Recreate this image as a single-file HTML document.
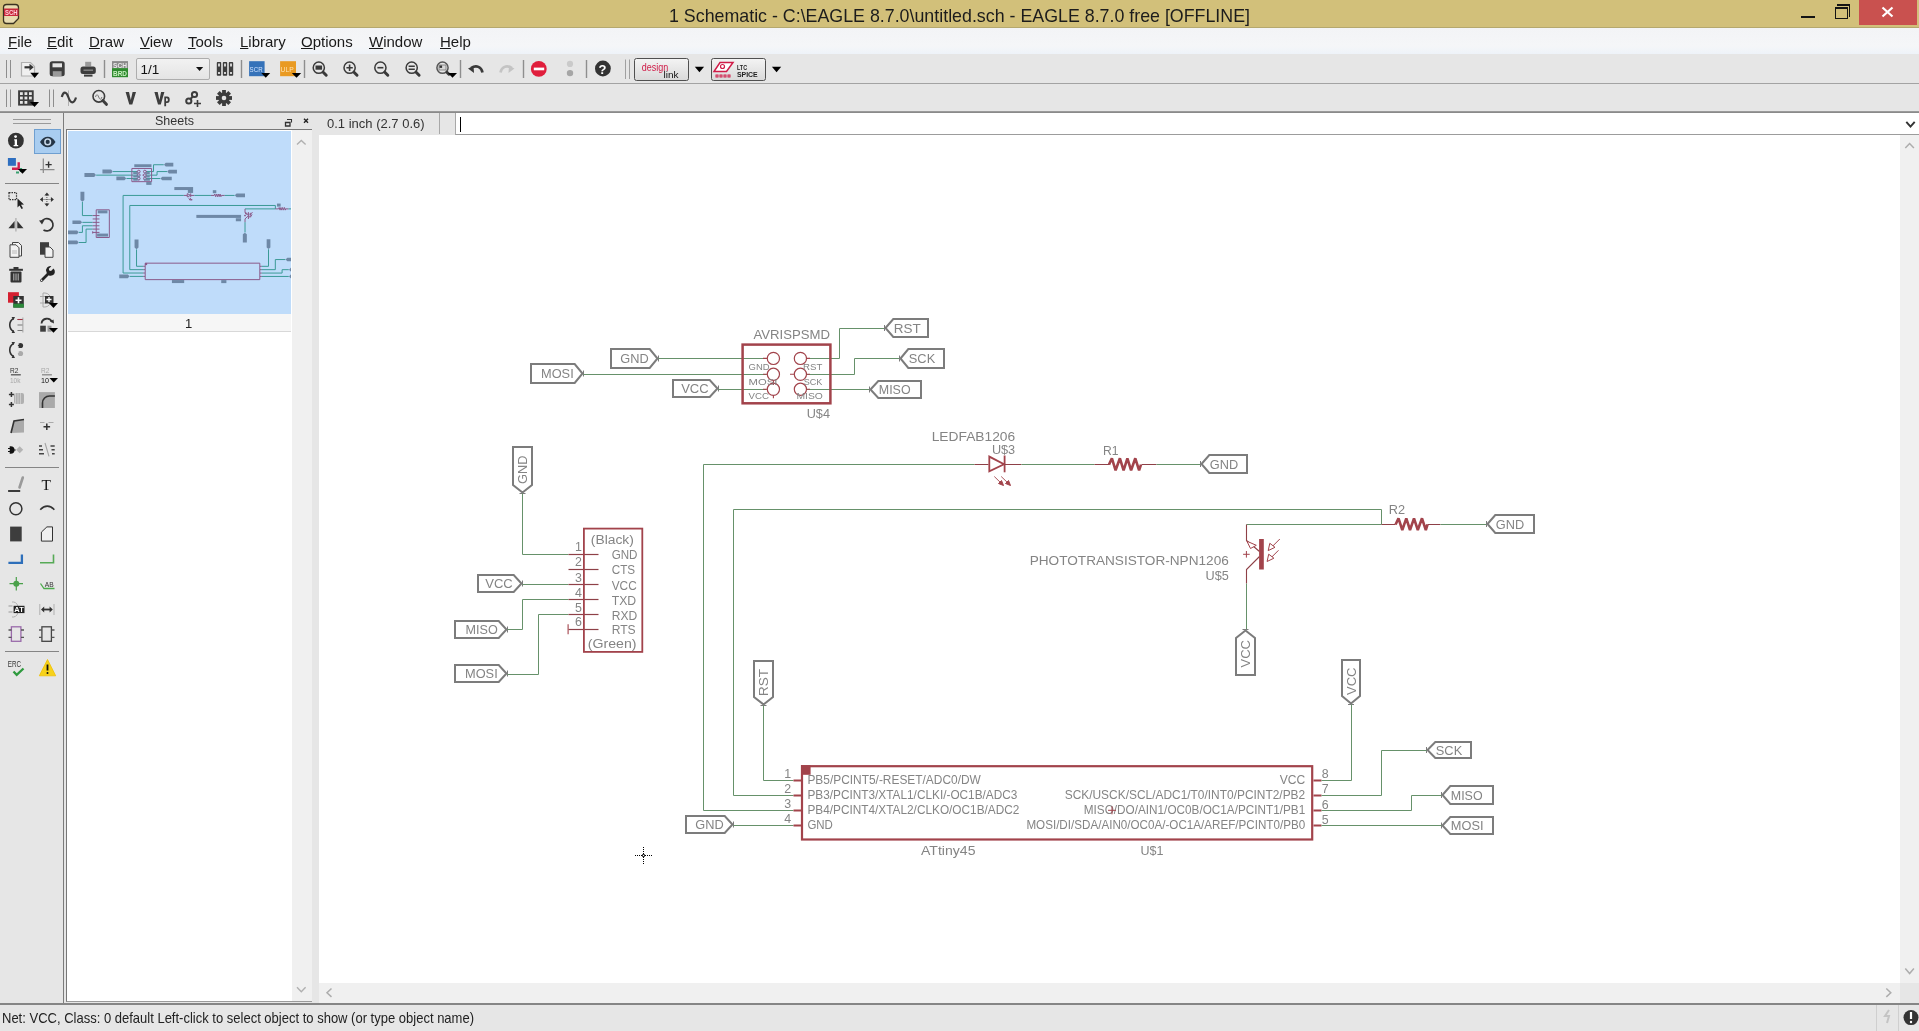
<!DOCTYPE html>
<html><head><meta charset="utf-8">
<style>
*{margin:0;padding:0;box-sizing:border-box}
html,body{width:1919px;height:1031px;overflow:hidden;background:#e6e6e6;font-family:"Liberation Sans",sans-serif}
body{will-change:transform}
.a{position:absolute}
svg{position:absolute;overflow:visible}
#title{left:0;top:0;width:1919px;height:28px;background:#d2c07a;border-bottom:1px solid #b5a86e}
#menu{left:0;top:28px;width:1919px;height:26px;background:linear-gradient(#f3f4f6 0,#f5f6f8 70%,#eef3f9 100%)}
#tb1{left:0;top:54px;width:1919px;height:30px;background:#e6e6e6;border-bottom:1px solid #a3a3a3}
#tb2{left:0;top:84px;width:1919px;height:29px;background:#e6e6e6;border-bottom:2px solid #9a9a9a}
.mi{position:absolute;top:33px;font-size:15px;color:#1a1a1a;line-height:17px}
#lefttb{left:0;top:113px;width:64px;height:890px;background:#e6e6e6;border-right:1px solid #a0a0a0}
#sheets{left:64px;top:113px;width:254px;height:890px;background:#e9e9e9;border-left:2px solid #a6a6a6}
#canvas{left:319px;top:135px;width:1581px;height:848px;background:#fff}
#status{left:0;top:1003px;width:1919px;height:28px;background:#e6e6e6;border-top:2px solid #858585}
</style></head><body>
<div id="title" class="a"></div>
<div class="a" style="left:0;top:0;width:1919px;height:28px;text-align:center">
  <span class="a" style="left:669px;top:5px;font-size:19px;line-height:21px;color:#1c1c1c;white-space:nowrap;transform:scaleX(0.9373);transform-origin:0 0">1 Schematic - C:\EAGLE 8.7.0\untitled.sch - EAGLE 8.7.0 free [OFFLINE]</span>
</div>
<!-- app icon -->
<svg style="left:0;top:0" width="30" height="28">
  <path d="M6.5,4.5 h9 a3,3 0 0 1 3,3 v11 l-5,5 h-7 a3,3 0 0 1 -3,-3 v-13 a3,3 0 0 1 3,-3z" fill="#e8dcb0" stroke="#3a3220" stroke-width="1.3"/>
  <rect x="4" y="8.5" width="14.5" height="7.5" fill="#c8283c"/>
  <text x="5" y="15" font-size="7.5" fill="#ffd0d8" font-family="Liberation Sans" font-weight="bold" textLength="12.5" lengthAdjust="spacingAndGlyphs">SCH</text>
</svg>
<!-- window buttons -->
<div class="a" style="left:1801px;top:16px;width:14px;height:2px;background:#141414"></div>
<div class="a" style="left:1837px;top:4px;width:13px;height:13px;border-top:2px solid #141414;border-right:1px solid #141414"></div>
<div class="a" style="left:1835px;top:7px;width:13px;height:12px;border:1px solid #141414;border-top-width:2px;background:#d2c07a"></div>
<div class="a" style="left:1859px;top:0;width:58px;height:25px;background:#c9514f"></div>
<svg style="left:1859px;top:0" width="58" height="25"><path d="M23.5,7.5 L33.5,16.5 M33.5,7.5 L23.5,16.5" stroke="#fff" stroke-width="2.2"/></svg>

<div id="menu" class="a"></div>
<span class="mi" style="left:8px"><u>F</u>ile</span>
<span class="mi" style="left:47px"><u>E</u>dit</span>
<span class="mi" style="left:89px"><u>D</u>raw</span>
<span class="mi" style="left:140px"><u>V</u>iew</span>
<span class="mi" style="left:188px"><u>T</u>ools</span>
<span class="mi" style="left:240px"><u>L</u>ibrary</span>
<span class="mi" style="left:301px"><u>O</u>ptions</span>
<span class="mi" style="left:369px"><u>W</u>indow</span>
<span class="mi" style="left:440px"><u>H</u>elp</span>

<div id="tb1" class="a"></div>
<div id="tb2" class="a"></div>
<svg style="left:0;top:0" width="820" height="113" font-family="Liberation Sans">
<defs>
<linearGradient id="btng" x1="0" y1="0" x2="0" y2="1"><stop offset="0" stop-color="#f4f4f4"/><stop offset="1" stop-color="#d9d9d9"/></linearGradient>
<linearGradient id="combog" x1="0" y1="0" x2="0" y2="1"><stop offset="0" stop-color="#f2f2f2"/><stop offset="1" stop-color="#e4e4e4"/></linearGradient>
</defs>
<g stroke="#8e8e8e" stroke-width="1.2">
<path d="M6.5,60V78 M10.5,60V78" stroke-width="1"/>
<path d="M104.5,60V78 M241.5,60V78 M304.5,60V78 M460.5,60V78 M523.5,60V78 M586.5,60V78" stroke-width="1.4"/>
<path d="M625.5,59.5V79 M629.5,59.5V79" stroke="#a0a0a0" stroke-width="1"/>
<path d="M6.5,89.5V107 M10.5,89.5V107 M49.5,89.5V107 M53.5,89.5V107" stroke-width="1"/>
</g>
<!-- open -->
<path d="M21.5,62.5h9l4,4v9.5h-13z" fill="#f0f0f0" stroke="#b0b0b0" stroke-width="1.2"/>
<path d="M24.5,67.3h6" stroke="#333" stroke-width="2.2"/><path d="M29.5,63.8l4.2,3.5l-4.2,3.5z" fill="#333"/>
<path d="M30.3,72.8h8.7l-4.35,5.1z" fill="#000"/>
<!-- save -->
<rect x="49.7" y="61.3" width="15" height="15" rx="2.5" fill="#3d3d3d"/>
<rect x="52.5" y="63.3" width="9.5" height="4" fill="#e6e6e6"/>
<rect x="52.8" y="71.2" width="8.8" height="5.1" fill="#9a9a9a"/>
<!-- print -->
<rect x="85.2" y="61.8" width="6" height="4.6" fill="#9a9a9a"/>
<rect x="80.5" y="66.5" width="15.3" height="7.4" rx="2.5" fill="#3d3d3d"/>
<rect x="83.5" y="69.5" width="9.5" height="1.4" fill="#888"/>
<rect x="84" y="74.6" width="8.5" height="2" fill="#3d3d3d"/>
<!-- sch brd -->
<rect x="112" y="61.1" width="16" height="7" fill="#8a8a8a"/>
<rect x="112" y="68.1" width="16" height="9.1" fill="#2f8a2f"/>
<text x="113" y="67.6" font-size="7" fill="#e8e8e8" font-weight="bold" textLength="14" lengthAdjust="spacingAndGlyphs">SCH</text>
<text x="113" y="76.2" font-size="8" fill="#c8f0c0" font-weight="bold" textLength="14" lengthAdjust="spacingAndGlyphs">BRD</text>
<!-- combo -->
<rect x="136.5" y="58.5" width="73" height="21" rx="1.5" fill="url(#combog)" stroke="#adadad"/>
<text x="140.5" y="73.8" font-size="13.5" fill="#111">1/1</text>
<path d="M196,67h7.2l-3.6,3.9z" fill="#111"/>
<!-- books -->
<g fill="#3d3d3d"><rect x="216.8" y="62.1" width="4.4" height="13.6" rx="0.8"/><rect x="222.8" y="62.1" width="4.4" height="13.6" rx="0.8"/><rect x="228.8" y="62.1" width="4.4" height="13.6" rx="0.8"/></g>
<g fill="#d0d0d0"><rect x="218" y="63.5" width="2" height="3"/><rect x="224" y="63.5" width="2" height="3"/><rect x="230" y="63.5" width="2" height="3"/><rect x="218" y="72" width="2" height="2"/><rect x="224" y="72" width="2" height="2"/><rect x="230" y="72" width="2" height="2"/></g>
<!-- SCR -->
<rect x="249.1" y="61.2" width="15.5" height="15" fill="#3572b9"/>
<text x="249.6" y="72" font-size="8" fill="#cfe3ff" textLength="13" lengthAdjust="spacingAndGlyphs">SCR</text>
<path d="M261.3,72.9h8.9l-4.45,4.9z" fill="#000"/>
<!-- ULP -->
<rect x="280.1" y="61.2" width="15.9" height="15" fill="#e99a22"/>
<text x="280.6" y="72" font-size="8" fill="#ffe2b0" textLength="13" lengthAdjust="spacingAndGlyphs">ULP</text>
<path d="M291.8,72.9h9.4l-4.7,4.9z" fill="#000"/>
<!-- zooms -->
<g stroke="#3a3a3a" fill="none" stroke-width="1.5">
<circle cx="318.8" cy="67.7" r="5.6"/><circle cx="349.6" cy="67.7" r="5.6"/><circle cx="380.4" cy="67.7" r="5.6"/><circle cx="411.7" cy="67.7" r="5.6"/><circle cx="442.5" cy="67.7" r="5.6" stroke="#555"/>
</g>
<g stroke="#3a3a3a" stroke-width="3" stroke-linecap="round">
<path d="M323.2,72.2l3,3 M354,72.2l3,3 M384.8,72.2l3,3 M416.1,72.2l3,3 M446.9,72.2l2,2"/>
</g>
<rect x="315.5" y="65.5" width="6.6" height="4.2" fill="#3a3a3a"/>
<path d="M349.6,64.5v6.4 M346.4,67.7h6.4" stroke="#3a3a3a" stroke-width="1.6"/>
<path d="M377.4,67.7h6" stroke="#3a3a3a" stroke-width="1.6"/>
<path d="M408.6,66.2h6.2 M408.6,69.2h6.2" stroke="#3a3a3a" stroke-width="1.5"/>
<rect x="439" y="65" width="7" height="5" fill="#d8d8d8" stroke="#777" stroke-width="0.8"/><rect x="439.5" y="65.5" width="2.6" height="2.4" fill="#333"/>
<path d="M448,73h9l-4.5,4.7z" fill="#000"/>
<!-- undo / redo -->
<path d="M482.5,72.5c-1,-5.5 -6,-8 -11.5,-4.5" stroke="#3a3a3a" stroke-width="2.6" fill="none"/>
<path d="M468,68.5l5.5,-2.6l0.5,7.2z" fill="#3a3a3a"/>
<path d="M500.5,72.5c1,-5.5 6,-8 11.5,-4.5" stroke="#c4c4c4" stroke-width="2.6" fill="none" transform="translate(0,0)"/>
<path d="M514.5,68.5l-5.5,-2.6l-0.5,7.2z" fill="#c4c4c4"/>
<!-- stop -->
<circle cx="538.8" cy="68.9" r="7.9" fill="#e01e3c"/>
<rect x="533.8" y="67.6" width="10.4" height="2.7" fill="#fff"/>
<!-- dots -->
<circle cx="570" cy="63.9" r="3.1" fill="#cacaca"/><circle cx="570" cy="73.1" r="3.2" fill="#a6a6a6"/>
<!-- help -->
<circle cx="602.9" cy="68.5" r="7.9" fill="#333"/>
<text x="598.6" y="73.6" font-size="13" font-weight="bold" fill="#fff">?</text>
<!-- designlink -->
<rect x="634.5" y="58.5" width="54" height="22" rx="2" fill="url(#btng)" stroke="#505050"/>
<text x="641.7" y="71.3" font-size="10.5" fill="#d01c48" textLength="26.5" lengthAdjust="spacingAndGlyphs">design</text>
<text x="663.5" y="78" font-size="9" fill="#111" textLength="15" lengthAdjust="spacingAndGlyphs">link</text>
<path d="M694.8,66.8h9.3l-4.65,5.4z" fill="#000"/>
<!-- LTC -->
<rect x="711.5" y="58.5" width="54" height="22" rx="2" fill="url(#btng)" stroke="#505050"/>
<path d="M720,62.5h13l-6.5,9h-12.5z" fill="#fff" stroke="#d01c48" stroke-width="1.5"/>
<circle cx="722.5" cy="66.5" r="2" fill="none" stroke="#d01c48" stroke-width="1.2"/>
<g fill="none" stroke="#d01c48" stroke-width="1"><rect x="716" y="75" width="2" height="2"/><rect x="720" y="75" width="2" height="2"/><rect x="724" y="75" width="2" height="2"/><rect x="728" y="75" width="2" height="2"/></g>
<text x="737" y="69.5" font-size="6.5" fill="#222" font-weight="bold" textLength="10" lengthAdjust="spacingAndGlyphs">LTC</text>
<text x="736.9" y="76.6" font-size="6.8" fill="#222" font-weight="bold" textLength="20.8" lengthAdjust="spacingAndGlyphs">SPICE</text>
<path d="M771.9,66.8h9.3l-4.65,5.4z" fill="#000"/>
<!-- toolbar 2 -->
<rect x="18.1" y="90.3" width="15.6" height="15.3" fill="#3d3d3d"/>
<g fill="#e6e6e6"><rect x="20" y="92.2" width="2.8" height="2.8"/><rect x="24.5" y="92.2" width="2.8" height="2.8"/><rect x="29" y="92.2" width="2.8" height="2.8"/><rect x="20" y="96.6" width="2.8" height="2.8"/><rect x="24.5" y="96.6" width="2.8" height="2.8"/><rect x="29" y="96.6" width="2.8" height="2.8"/><rect x="20" y="101" width="2.8" height="2.8"/><rect x="24.5" y="101" width="2.8" height="2.8"/></g>
<path d="M30,101.9h9l-4.5,5z" fill="#000"/>
<path d="M68.5,90.5V106" stroke="#b0b0b0" stroke-width="1"/>
<path d="M61.8,97c1.5,-6 4.5,-6 6.7,0.5s5.5,6.5 7.5,0" stroke="#3d3d3d" stroke-width="2.2" fill="none"/>
<circle cx="98.8" cy="96.3" r="5.8" fill="none" stroke="#3d3d3d" stroke-width="1.6"/>
<path d="M95.5,97c1,-3 2,-3 3.2,0s2.2,3 3.2,0" stroke="#777" stroke-width="1" fill="none"/>
<path d="M102.8,100.5l3.6,3.8" stroke="#3d3d3d" stroke-width="3" stroke-linecap="round"/>
<path d="M125.6,91.9h3.4l1.8,8l1.8,-8h3.4l-3.7,12.5h-3z" fill="#3d3d3d"/>
<path d="M154.4,91.9h3.3l1.7,8l1.7,-8h3.3l-3.6,12.5h-2.8z" fill="#3d3d3d"/>
<path d="M164.3,96.5h2.8a2.6,3.2 0 0 1 0,6.4h-1v3.3h-1.8z" fill="#3d3d3d"/><path d="M166,98.2h0.9a1,1.5 0 0 1 0,3h-0.9z" fill="#e6e6e6"/>
<g stroke="#3d3d3d" stroke-width="2" fill="none"><circle cx="188.8" cy="101" r="2.6"/><circle cx="194.5" cy="94.5" r="2.6"/><path d="M190.5,99l2.4,-2.6"/></g>
<path d="M197.5,100v7 M194,103.5h7" stroke="#3d3d3d" stroke-width="1.6"/>
<g transform="translate(224,98)" fill="#3d3d3d"><circle r="5.6"/><rect x="-1.9" y="-8" width="3.8" height="4" transform="rotate(0)"/><rect x="-1.9" y="-8" width="3.8" height="4" transform="rotate(45)"/><rect x="-1.9" y="-8" width="3.8" height="4" transform="rotate(90)"/><rect x="-1.9" y="-8" width="3.8" height="4" transform="rotate(135)"/><rect x="-1.9" y="-8" width="3.8" height="4" transform="rotate(180)"/><rect x="-1.9" y="-8" width="3.8" height="4" transform="rotate(225)"/><rect x="-1.9" y="-8" width="3.8" height="4" transform="rotate(270)"/><rect x="-1.9" y="-8" width="3.8" height="4" transform="rotate(315)"/><circle r="2.3" fill="#e6e6e6"/></g>
</svg>


<div id="lefttb" class="a"></div>
<svg style="left:0;top:0" width="64" height="1003" font-family="Liberation Sans">
<path d="M13,119.5h38 M13,123.5h38" stroke="#9a9a9a" stroke-width="1"/>
<path d="M5,183.5h54 M5,467.5h54 M5,651.5h54" stroke="#858585" stroke-width="1"/>
<!-- info -->
<circle cx="15.9" cy="140.7" r="7.9" fill="#333"/>
<path d="M14.2,139.3h2.8v5.6h1.2v1.3h-4.6v-1.3h1.1v-4.3h-0.5z" fill="#fff"/><circle cx="15.6" cy="136.6" r="1.4" fill="#fff"/>
<!-- eye button -->
<rect x="34.5" y="129.5" width="26" height="24" fill="#a9cdf0" stroke="#6f9fd0" stroke-width="1"/>
<path d="M40,141.9c4,-7 11.5,-7 15.5,0c-4,7 -11.5,7 -15.5,0z" fill="#253545"/>
<circle cx="47.7" cy="141.9" r="2.8" fill="none" stroke="#c8d8e8" stroke-width="1.5"/>
<!-- layers -->
<rect x="7.9" y="158" width="8" height="7.8" fill="#2e6fc0"/>
<path d="M12,168.7h6.7v-6.5" stroke="#d02050" stroke-width="2.4" fill="none"/>
<path d="M16,172.5h3 M21,168v4" stroke="#3aa070" stroke-width="2.2"/>
<path d="M17.9,168.9h9.1l-4.55,4.8z" fill="#000"/>
<!-- mark -->
<path d="M43.3,158.6v14.3 M40.1,169.7h14.4" stroke="#8a8a8a" stroke-width="1.2"/>
<path d="M48.6,161.5v6.2 M45.5,164.6h6.2" stroke="#333" stroke-width="1.4"/>
<!-- select -->
<rect x="9" y="192.7" width="7.5" height="7" fill="none" stroke="#333" stroke-width="1.2" stroke-dasharray="1.5,1"/>
<path d="M17.5,198.5l0,9l2,-2l2,3.5l1.5,-0.8l-2,-3.5l3,-0.3z" fill="#222"/>
<!-- move -->
<g fill="#333"><path d="M46.9,192.5l-2.5,3h5z M46.9,206.5l-2.5,-3h5z M39.9,199.5l3,-2.5v5z M53.9,199.5l-3,-2.5v5z"/></g>
<path d="M46.9,195v9 M42.5,199.5h9" stroke="#333" stroke-width="0.8" stroke-dasharray="1,1"/>
<!-- mirror -->
<path d="M15.9,218v13.5" stroke="#b8b8b8" stroke-width="1.6"/>
<path d="M14.6,221v7.2h-6.2z M17.3,221v7.2h6.2z" fill="#333"/>
<!-- rotate -->
<path d="M41.5,221.5a6.2,6.2 0 1 1 2,8.5" stroke="#333" stroke-width="1.7" fill="none"/>
<path d="M39,220.5l5.5,-0.5l-2.5,4.5z" fill="#333"/>
<!-- copy -->
<path d="M12.5,242.5h6l3,3v10.5h-9z" fill="#f2f2f2" stroke="#444" stroke-width="1"/>
<path d="M10,244.8h6l3,3v9.5h-9z" fill="#f2f2f2" stroke="#444" stroke-width="1"/>
<path d="M12,251h5 M12,253h5" stroke="#aaa" stroke-width="0.8"/>
<!-- paste -->
<rect x="40" y="242.2" width="9" height="12.5" fill="#3d3d3d"/>
<path d="M45,247h5l3,3v7.3h-8z" fill="#f2f2f2" stroke="#444" stroke-width="1"/>
<!-- trash -->
<rect x="9.2" y="268.8" width="13.7" height="2" fill="#333"/><rect x="13.5" y="267" width="5" height="2" fill="#333"/>
<rect x="10.5" y="271.5" width="11" height="11" rx="1" fill="#333"/>
<path d="M13.8,273.5v7 M16,273.5v7 M18.2,273.5v7" stroke="#ccc" stroke-width="0.9"/>
<!-- wrench -->
<path d="M41.5,280.5l7,-7" stroke="#222" stroke-width="2.8" stroke-linecap="round"/>
<path d="M46.5,272a4.2,4.2 0 1 0 7,-3.5l-2.5,2.5l-1.8,-0.5l-0.4,-1.8l2.5,-2.5a4.2,4.2 0 0 0 -4.8,5.8z" fill="#222"/>
<circle cx="41.6" cy="280.4" r="0.8" fill="#eee"/>
<!-- add -->
<rect x="8" y="292.2" width="10.9" height="10.5" fill="#d42030"/>
<rect x="13.3" y="296" width="10.5" height="11.6" fill="#333"/>
<rect x="13.3" y="303.7" width="10.5" height="3.9" fill="#2a8a3a"/>
<path d="M18.5,297.3v6 M15.5,300.3h6" stroke="#fff" stroke-width="1.6"/>
<!-- replace -->
<path d="M40,296.5h6 M40,303h6" stroke="#aaa" stroke-width="1"/>
<path d="M43,293h2a6,7 0 0 1 0,14h-2z" fill="none" stroke="#aaa" stroke-width="1"/>
<rect x="45" y="296" width="8.5" height="7.5" fill="#333"/>
<path d="M49,297v5 M46.5,299.5h5" stroke="#fff" stroke-width="1.3"/>
<path d="M48.9,303h9.1l-4.55,4.9z" fill="#000"/>
<!-- pinswap -->
<path d="M13.5,318.5c-5,3 -5,10 0,13" stroke="#333" stroke-width="1.6" fill="none"/>
<path d="M11.5,317l3.5,0l-1.5,3z M11.5,333l3.5,0l-1.5,-3z" fill="#333"/>
<path d="M22.8,317.5v15" stroke="#bbb" stroke-width="1.6"/>
<path d="M17.5,319.5h5 M17.5,325h5 M17.5,330.5h5" stroke="#777" stroke-width="1.1"/>
<path d="M17.5,319.5h5" stroke="#a03040" stroke-width="1.1"/>
<!-- gateswap -->
<path d="M41.5,323.5a5.5,5.5 0 0 1 10.5,-1.5" stroke="#333" stroke-width="1.8" fill="none"/>
<path d="M50,321.5l3.5,-2l0.5,4z" fill="#333"/>
<rect x="40.2" y="325.7" width="5.6" height="6" fill="#3d3d3d"/>
<rect x="47.5" y="325.7" width="4" height="6" fill="#999"/>
<path d="M48.9,328h9.1l-4.55,4.8z" fill="#000"/>
<!-- swap 349 -->
<path d="M13.5,343.5c-5,3 -5,10 0,13" stroke="#333" stroke-width="1.6" fill="none"/>
<path d="M11.5,342l3.5,0l-1.5,3z M11.5,358l3.5,0l-1.5,-3z" fill="#333"/>
<circle cx="20.5" cy="345.5" r="2.6" fill="#333"/><circle cx="20.5" cy="353.5" r="2.6" fill="#aaa"/>
<path d="M17,344.5h2 M17,346.5h2 M17,352.5h2" stroke="#e6e6e6" stroke-width="0.6"/>
<!-- name / value -->
<text x="9.9" y="373" font-size="7.5" fill="#333" textLength="8.4" lengthAdjust="spacingAndGlyphs">R2</text>
<path d="M10.9,374.8h9.9" stroke="#555" stroke-width="1.3"/>
<text x="9.9" y="382.7" font-size="7.5" fill="#a8a8a8" textLength="10.5" lengthAdjust="spacingAndGlyphs">10k</text>
<text x="41" y="373" font-size="7.5" fill="#a8a8a8" textLength="8.4" lengthAdjust="spacingAndGlyphs">R2</text>
<path d="M42,374.8h9.9" stroke="#888" stroke-width="1.3"/>
<text x="41" y="382.7" font-size="7.5" fill="#111" textLength="8" lengthAdjust="spacingAndGlyphs">10</text>
<path d="M49.5,378h8.5l-4.25,4.5z" fill="#000"/>
<!-- smash -->
<path d="M11.4,392v5 M8.9,394.5h5 M11.4,402v5 M8.9,404.5h5" stroke="#333" stroke-width="1.5"/>
<rect x="14" y="393" width="10" height="11" fill="#b0b0b0" rx="2"/>
<path d="M15.5,393v11 M18,393v11 M20.5,393v11" stroke="#d4d4d4" stroke-width="0.8"/>
<!-- miter -->
<rect x="39" y="392.1" width="15.9" height="15.9" fill="#aaa"/>
<path d="M42.5,408v-5a7,7 0 0 1 7,-7h5.4" stroke="#333" stroke-width="1.6" fill="none"/>
<!-- split -->
<path d="M11,433l3,-12l10,-1.5v13z" fill="#aaa"/>
<path d="M11,433l3,-12l10,-1.5" stroke="#333" stroke-width="1.6" fill="none"/>
<!-- invoke-ish -->
<path d="M40,422.5h4.5 M48.5,422.5h5" stroke="#aaa" stroke-width="1.1"/>
<path d="M46.8,423.5v6.5 M43.5,426.8h6.6" stroke="#333" stroke-width="1.5"/>
<!-- plug -->
<path d="M9.7,446.2h1a3.8,3.75 0 0 1 0,7.5h-1z" fill="#111"/>
<path d="M8,448.5h2 M8,451.5h2 M13.5,450h2.2" stroke="#111" stroke-width="1.2"/>
<path d="M16.2,449.8l3.5,-3.5l3.5,3.5l-3.5,3.5z" fill="#b4b4b4"/>
<!-- change -->
<path d="M39,446h3 M39,449.8h4 M39,453.8h5 M50.5,446h4.2 M51.5,449.8h3.2 M52,453.8h2.7" stroke="#444" stroke-width="1.5"/>
<path d="M45,443l4,13.3" stroke="#a4a4a4" stroke-width="1.1"/>
<!-- line -->
<path d="M8.1,491h12.1" stroke="#111" stroke-width="1.6"/>
<path d="M22.8,477.5l-3.3,10" stroke="#9a9a9a" stroke-width="2.6" stroke-linecap="round"/>
<!-- T -->
<text x="41.5" y="489.8" font-size="15.5" font-family="Liberation Serif" fill="#111">T</text>
<!-- circle / arc -->
<circle cx="15.9" cy="508.8" r="6" fill="none" stroke="#333" stroke-width="1.5"/>
<path d="M40.3,509.8c4,-5 10,-5 14,0" stroke="#333" stroke-width="1.7" fill="none"/>
<!-- rect / polygon -->
<rect x="10.1" y="526.6" width="11.6" height="14.8" fill="#3d3d3d"/>
<path d="M41.4,541.1v-9l5.5,-5.2h5.6v14.2z" fill="#f0f0f0" stroke="#333" stroke-width="1"/>
<!-- bus / net -->
<path d="M8.4,562.9h13.5v-8.4" stroke="#2e6fba" stroke-width="2.3" fill="none"/>
<path d="M40,562.7h13.5v-8.2" stroke="#56aa56" stroke-width="1.6" fill="none"/>
<!-- junction / label -->
<path d="M16.3,577v13.5 M9.5,583.7h13.5" stroke="#4aa04a" stroke-width="1.2"/>
<circle cx="16.3" cy="583.7" r="3" fill="#4aa04a"/>
<path d="M40.5,583.5l3.5,5h10.5" stroke="#4caa4c" stroke-width="1.3" fill="none"/>
<text x="44.8" y="587.2" font-size="7.5" fill="#333" textLength="8.9" lengthAdjust="spacingAndGlyphs">AB</text>
<!-- attribute / dimension -->
<path d="M8.5,606h4 M8.5,612h4" stroke="#999" stroke-width="1"/>
<path d="M12,602h1.5a5,7.5 0 0 1 0,15h-1.5" stroke="#aaa" stroke-width="0.9" fill="none"/>
<rect x="13.6" y="605.8" width="10.9" height="7.3" fill="#222"/>
<text x="14.3" y="612" font-size="6.8" font-weight="bold" fill="#fff" textLength="9.4" lengthAdjust="spacingAndGlyphs">AT</text>
<path d="M39.8,604v11 M54,604v11" stroke="#aaa" stroke-width="0.9"/>
<path d="M43.5,609.5h6.8" stroke="#333" stroke-width="1.8"/>
<path d="M41,609.5l3.2,-3v6z M52.8,609.5l-3.2,-3v6z" fill="#333"/>
<!-- modules -->
<rect x="11.4" y="626.8" width="9.5" height="14.5" fill="none" stroke="#9a6aaa" stroke-width="1.3"/>
<path d="M8.5,630h3 M8.5,637.4h3 M21,630h3 M21,637.4h3" stroke="#555" stroke-width="1.3"/>
<rect x="41.9" y="626.8" width="9.5" height="14.5" fill="none" stroke="#444" stroke-width="1.3"/>
<path d="M39,630h3 M39,637.4h3 M51.5,630h3 M51.5,637.4h3" stroke="#555" stroke-width="1.3"/>
<!-- ERC / warning -->
<text x="7.8" y="666.6" font-size="8.3" fill="#333" textLength="13.3" lengthAdjust="spacingAndGlyphs">ERC</text>
<path d="M13.5,671.5l3.2,3.3l6.8,-6.3" stroke="#2e9a3e" stroke-width="2.3" fill="none"/>
<path d="M47.5,659.5l8.2,16.3h-16.4z" fill="#f7d21a" stroke="#f0c000" stroke-width="0.8" stroke-linejoin="round"/>
<path d="M47.5,664.5v6" stroke="#111" stroke-width="1.8"/><circle cx="47.5" cy="673" r="1" fill="#111"/>
</svg>
<div class="a" style="left:63px;top:113px;width:1px;height:890px;background:#7c7c7c"></div>
<div class="a" style="left:64px;top:113px;width:254px;height:890px;background:#e6e6e6"></div>
<span class="a" style="left:155px;top:114px;font-size:12.5px;line-height:15px;color:#333">Sheets</span>
<svg style="left:0;top:0" width="320" height="1003">
<path d="M285.5,122.5h4.5v3.5h-4.5z" fill="none" stroke="#333" stroke-width="1.3"/><path d="M287,119.5h4.5v3" fill="none" stroke="#333" stroke-width="1.1"/>
<path d="M304,118.8l4,4 M308,118.8l-4,4" stroke="#222" stroke-width="1.4"/>
</svg>
<div class="a" style="left:66px;top:129px;width:246px;height:873px;background:#fff;border-top:1px solid #787878;border-left:1px solid #787878;border-bottom:1px solid #9a9a9a"></div>
<div class="a" style="left:292px;top:130px;width:20px;height:871px;background:#f0f0f0"></div>
<svg style="left:0;top:0" width="320" height="1003">
<path d="M297,144.5l4.3,-4l4.3,4" stroke="#b0b0b0" stroke-width="1.4" fill="none"/>
<path d="M297,987.3l4.3,4.5l4.3,-4.5" stroke="#b0b0b0" stroke-width="1.4" fill="none"/>
</svg>
<div class="a" style="left:68px;top:131px;width:223px;height:183px;background:#bfdcfa"></div>
<div class="a" style="left:68px;top:314px;width:223px;height:18px;background:#f6f6f6;border-bottom:1px solid #d8d8d8"></div>
<span class="a" style="left:185px;top:316px;font-size:13px;line-height:15px;color:#222">1</span>
<!-- THUMB START -->
<svg style="left:68px;top:132px;overflow:hidden" width="223" height="182"><style>.th path[stroke],.th rect[stroke],.th circle[stroke]{vector-effect:non-scaling-stroke;stroke-width:1px}</style><g class="th" transform="translate(-102.923,-40.919) scale(0.2246)"><path d="M531.3,364.5 L574.8000000000001,364.5 L582.6,373.4 L574.8000000000001,382.3 L531.3,382.3 Z" fill="#6e88a6"/>
<path d="M611.6,349.6 L650.0,349.6 L657.8,358.35 L650.0,367.1 L611.6,367.1 Z" fill="#6e88a6"/>
<path d="M673.5,380.6 L709.6,380.6 L717.4,388.75 L709.6,396.9 L673.5,396.9 Z" fill="#6e88a6"/>
<path d="M658.8,358.4 L766.5,358.4" stroke="#3b9a96" stroke-width="4.5" fill="none"/>
<path d="M583.6,374.3 L766.5,374.3" stroke="#3b9a96" stroke-width="4.5" fill="none"/>
<path d="M718.4,389.3 L766.5,389.3" stroke="#3b9a96" stroke-width="4.5" fill="none"/>
<path d="M806.4,358.4 L839,358.4 L839,328 L884.6,328" stroke="#3b9a96" stroke-width="4.5" fill="none"/>
<path d="M806.4,374.3 L854.7,374.3 L854.7,358.4 L899,358.4" stroke="#3b9a96" stroke-width="4.5" fill="none"/>
<path d="M806.4,389.3 L869,389.3" stroke="#3b9a96" stroke-width="4.5" fill="none"/>
<path d="M885.6,327.95000000000005 L893.4,319.6 L927.2,319.6 L927.2,336.3 L893.4,336.3 Z" fill="#6e88a6"/>
<path d="M900.0,358.5 L907.8,349.8 L943.3,349.8 L943.3,367.2 L907.8,367.2 Z" fill="#6e88a6"/>
<path d="M870.0,389.25 L877.8,381.0 L920.2,381.0 L920.2,397.5 L877.8,397.5 Z" fill="#6e88a6"/>
<rect x="742.6" y="344.6" width="87.8" height="58.7" fill="none" stroke="#8a5a8a" stroke-width="2.5"/>
<circle cx="773.4" cy="358.4" r="6.1" fill="none" stroke="#8a5a8a" stroke-width="1.2"/>
<circle cx="773.4" cy="374.3" r="6.1" fill="none" stroke="#8a5a8a" stroke-width="1.2"/>
<circle cx="773.4" cy="389.3" r="6.1" fill="none" stroke="#8a5a8a" stroke-width="1.2"/>
<circle cx="800.4" cy="358.4" r="6.1" fill="none" stroke="#8a5a8a" stroke-width="1.2"/>
<circle cx="800.4" cy="374.3" r="6.1" fill="none" stroke="#8a5a8a" stroke-width="1.2"/>
<circle cx="800.4" cy="389.3" r="6.1" fill="none" stroke="#8a5a8a" stroke-width="1.2"/>
<path d="M763,358.4h4 M763,374.3h4 M763,389.3h4 M806,358.4h4 M806,374.3h4 M806,389.3h4 M790,374.3h4 M773.4,380.5v4.5 M773.4,395.3v3" stroke="#8a5a8a" stroke-width="1.1"/>
<rect x="748.6" y="360.565" width="21" height="9.135" fill="#6e88a6"/>
<rect x="748.6" y="375.565" width="28.7" height="9.135" fill="#6e88a6"/>
<rect x="748.6" y="389.96500000000003" width="20.4" height="9.135" fill="#6e88a6"/>
<rect x="803.1" y="360.565" width="19.2" height="9.135" fill="#6e88a6"/>
<rect x="803.7" y="375.565" width="18.6" height="9.135" fill="#6e88a6"/>
<rect x="796.5" y="389.96500000000003" width="26.4" height="9.135" fill="#6e88a6"/>
<rect x="753.4" y="325.79" width="76.6" height="12.81" fill="#6e88a6"/>
<rect x="806.7" y="404.89" width="23.3" height="12.81" fill="#6e88a6"/>
<path d="M513.7,447.8 L531.1,447.8 L531.1,485.2 L522.4000000000001,492.7 L513.7,485.2 Z" fill="#6e88a6"/>
<path d="M522.4,493.7 L522.4,554.3 L568.1,554.3" stroke="#3b9a96" stroke-width="4.5" fill="none"/>
<path d="M478.0,575.9 L513.4000000000001,575.9 L521.2,583.95 L513.4000000000001,592.0 L478.0,592.0 Z" fill="#6e88a6"/>
<path d="M522.2,584.5 L568.1,584.5" stroke="#3b9a96" stroke-width="4.5" fill="none"/>
<path d="M455.7,621.0 L498.2,621.0 L506.0,629.05 L498.2,637.1 L455.7,637.1 Z" fill="#6e88a6"/>
<path d="M507,629.2 L522.4,629.2 L522.4,599.7 L568.1,599.7" stroke="#3b9a96" stroke-width="4.5" fill="none"/>
<path d="M455.7,665.8 L498.2,665.8 L506.0,673.8499999999999 L498.2,681.9 L455.7,681.9 Z" fill="#6e88a6"/>
<path d="M507,674.2 L538.7,674.2 L538.7,614.5 L568.1,614.5" stroke="#3b9a96" stroke-width="4.5" fill="none"/>
<path d="M568.1,554.3 L598.4,554.3" stroke="#8a5a8a" stroke-width="4.5" fill="none"/>
<path d="M568.1,569.4 L598.4,569.4" stroke="#8a5a8a" stroke-width="4.5" fill="none"/>
<path d="M568.1,584.5 L598.4,584.5" stroke="#8a5a8a" stroke-width="4.5" fill="none"/>
<path d="M568.1,599.7 L598.4,599.7" stroke="#8a5a8a" stroke-width="4.5" fill="none"/>
<path d="M568.1,614.5 L598.4,614.5" stroke="#8a5a8a" stroke-width="4.5" fill="none"/>
<path d="M568.1,629.3 L598.4,629.3" stroke="#8a5a8a" stroke-width="4.5" fill="none"/>
<path d="M568.1,624.3v10" stroke="#8a5a8a" stroke-width="1.1"/>
<rect x="583.9" y="528.6" width="58.4" height="123.3" fill="none" stroke="#8a5a8a" stroke-width="1.8"/>
<rect x="590.8" y="531.175" width="43.1" height="13.125" fill="#6e88a6"/>
<rect x="587.7" y="634.475" width="48.8" height="13.125" fill="#6e88a6"/>
<path d="M703.5,810 L703.5,464.6 L974,464.6" stroke="#3b9a96" stroke-width="4.5" fill="none"/>
<path d="M974,464.6 L988.6,464.6" stroke="#8a5a8a" stroke-width="4.5" fill="none"/>
<path d="M989.3,456.6 L989.3,471.3 L1004,464.2 Z" fill="none" stroke="#8a5a8a" stroke-width="1.8"/>
<path d="M1004.6,455.5 V472.3" stroke="#8a5a8a" stroke-width="1.8"/>
<path d="M1004.6,464.6 L1021,464.6" stroke="#8a5a8a" stroke-width="4.5" fill="none"/>
<path d="M1021,464.6 L1094.5,464.6" stroke="#3b9a96" stroke-width="4.5" fill="none"/>
<path d="M1094.5,464.6 L1109,464.6" stroke="#8a5a8a" stroke-width="4.5" fill="none"/>
<path d="M1109,464.6 L1111.9,458.3 L1115.6,470.3 L1119.9,458.3 L1123.6,470.3 L1127.4,458.3 L1131.1,470.3 L1135.3,458.3 L1139.1,470.3 L1141,464.6" fill="none" stroke="#8a5a8a" stroke-width="2.6" stroke-linejoin="bevel"/>
<path d="M1141,464.6 L1156,464.6" stroke="#8a5a8a" stroke-width="4.5" fill="none"/>
<path d="M1156,464.6 L1200,464.6" stroke="#3b9a96" stroke-width="4.5" fill="none"/>
<path d="M1201.0,464.0 L1208.8,455.7 L1246.4,455.7 L1246.4,472.3 L1208.8,472.3 Z" fill="#6e88a6"/>
<path d="M994.3,476.5 L1002,484 M1001.2,476.5 L1009,484" stroke="#8a5a8a" stroke-width="0.9"/>
<path d="M1003.5,485.5 L998.5,483.5 L1001.5,480.5 Z M1010.5,485.5 L1005.5,483.5 L1008.5,480.5 Z" fill="#8a5a8a" stroke="#8a5a8a" stroke-width="1"/>
<rect x="931.7" y="427.26" width="83.5" height="13.440000000000001" fill="#6e88a6"/>
<rect x="991.9" y="440.06" width="23.3" height="13.440000000000001" fill="#6e88a6"/>
<rect x="1103" y="441.26" width="15.5" height="13.440000000000001" fill="#6e88a6"/>
<path d="M733.3,795.1 L733.3,509.3 L1381.5,509.3 L1381.5,524.5" stroke="#3b9a96" stroke-width="4.5" fill="none"/>
<path d="M1246.4,524.5 L1381.5,524.5" stroke="#3b9a96" stroke-width="4.5" fill="none"/>
<path d="M1246.4,524.5 L1246.4,540.5 L1259.1,551.4" stroke="#8a5a8a" stroke-width="4.5" fill="none"/>
<path d="M1259.1,556.8 L1246.4,569.2 L1246.4,583.7" stroke="#8a5a8a" stroke-width="4.5" fill="none"/>
<rect x="1259.1" y="539" width="4.7" height="30.5" fill="#8a5a8a"/>
<path d="M1246.9,541.2 L1256.3,545.3 L1250.5,548.5 Z" fill="#fff" stroke="#8a5a8a" stroke-width="1"/>
<path d="M1246.4,551v6.6 M1243.1,554.3h6.6" stroke="#8a5a8a" stroke-width="1"/>
<path d="M1279.8,539 L1270,548.8 M1278.5,550.3 L1268.8,560" stroke="#8a5a8a" stroke-width="1"/>
<path d="M1268.2,550.6 L1269.8,543.3 L1275,547.3 Z M1267.1,561.5 L1268.7,554.2 L1273.9,558.2 Z" fill="#fff" stroke="#8a5a8a" stroke-width="1"/>
<path d="M1246.4,583.7 L1246.4,629.4" stroke="#3b9a96" stroke-width="4.5" fill="none"/>
<path d="M1245.6,630.4 L1254.5,637.9 L1254.5,674.4 L1236.7,674.4 L1236.7,637.9 Z" fill="#6e88a6"/>
<path d="M1381.5,524.5 L1395.6,524.5" stroke="#8a5a8a" stroke-width="4.5" fill="none"/>
<path d="M1395.6,524.5 L1398.5,518.3 L1402.3,530 L1406.3,518.3 L1410,530 L1414,518.3 L1417.8,530 L1422,518.3 L1425.8,530 L1427.5,524.5" fill="none" stroke="#8a5a8a" stroke-width="2.6" stroke-linejoin="bevel"/>
<path d="M1427,524.5 L1440.2,524.5" stroke="#8a5a8a" stroke-width="4.5" fill="none"/>
<path d="M1440.2,524.5 L1486.7,524.5" stroke="#3b9a96" stroke-width="4.5" fill="none"/>
<path d="M1487.7,523.95 L1495.5,515.8 L1533.3,515.8 L1533.3,532.1 L1495.5,532.1 Z" fill="#6e88a6"/>
<rect x="1388.7" y="500.85999999999996" width="16.3" height="13.440000000000001" fill="#6e88a6"/>
<rect x="1029.7" y="551.26" width="199.1" height="13.440000000000001" fill="#6e88a6"/>
<rect x="1205.5" y="566.16" width="23.3" height="13.440000000000001" fill="#6e88a6"/>
<path d="M754.6,661.2 L772.2,661.2 L772.2,696.5 L763.4000000000001,704.0 L754.6,696.5 Z" fill="#6e88a6"/>
<path d="M763.4,705 L763.4,780.1 L793,780.1" stroke="#3b9a96" stroke-width="4.5" fill="none"/>
<path d="M703.5,810.1 L793,810.1" stroke="#3b9a96" stroke-width="4.5" fill="none"/>
<path d="M733.3,795.1 L793,795.1" stroke="#3b9a96" stroke-width="4.5" fill="none"/>
<path d="M686.3,816.8 L724.5,816.8 L732.3,824.8499999999999 L724.5,832.9 L686.3,832.9 Z" fill="#6e88a6"/>
<path d="M733.3,825.1 L793,825.1" stroke="#3b9a96" stroke-width="4.5" fill="none"/>
<path d="M793,780.1 L801,780.1" stroke="#8a5a8a" stroke-width="4.5" fill="none"/>
<path d="M793,795.1 L801,795.1" stroke="#8a5a8a" stroke-width="4.5" fill="none"/>
<path d="M793,810.1 L801,810.1" stroke="#8a5a8a" stroke-width="4.5" fill="none"/>
<path d="M793,825.1 L801,825.1" stroke="#8a5a8a" stroke-width="4.5" fill="none"/>
<rect x="802" y="766.2" width="510.2" height="73.3" fill="none" stroke="#8a5a8a" stroke-width="2.2"/>
<rect x="801" y="765.2" width="9.6" height="9.6" fill="#8a5a8a"/>
<path d="M1313.2,780.2 L1321.3,780.2" stroke="#8a5a8a" stroke-width="4.5" fill="none"/>
<path d="M1313.2,795.1 L1321.3,795.1" stroke="#8a5a8a" stroke-width="4.5" fill="none"/>
<path d="M1313.2,810.3 L1321.3,810.3" stroke="#8a5a8a" stroke-width="4.5" fill="none"/>
<path d="M1313.2,825.3 L1321.3,825.3" stroke="#8a5a8a" stroke-width="4.5" fill="none"/>
<path d="M1342.8,660.0 L1359.4,660.0 L1359.4,695.9 L1351.1,703.4 L1342.8,695.9 Z" fill="#6e88a6"/>
<path d="M1351,704.4 L1351,780.2 L1321.3,780.2" stroke="#3b9a96" stroke-width="4.5" fill="none"/>
<path d="M1427.0,750.1 L1434.8,742.2 L1470.5,742.2 L1470.5,758.0 L1434.8,758.0 Z" fill="#6e88a6"/>
<path d="M1321.3,795.1 L1381.3,795.1 L1381.3,750.1 L1426,750.1" stroke="#3b9a96" stroke-width="4.5" fill="none"/>
<path d="M1442.3,795.2 L1450.1,786.9 L1492.2,786.9 L1492.2,803.5 L1450.1,803.5 Z" fill="#6e88a6"/>
<path d="M1321.3,810.3 L1411.5,810.3 L1411.5,795.2 L1441.3,795.2" stroke="#3b9a96" stroke-width="4.5" fill="none"/>
<path d="M1442.3,825.4000000000001 L1450.1,817.2 L1492.2,817.2 L1492.2,833.6 L1450.1,833.6 Z" fill="#6e88a6"/>
<path d="M1321.3,825.3 L1441.3,825.3" stroke="#3b9a96" stroke-width="4.5" fill="none"/>
<rect x="921" y="841.3599999999999" width="54.5" height="13.440000000000001" fill="#6e88a6"/>
<rect x="1140.5" y="841.56" width="23" height="13.440000000000001" fill="#6e88a6"/></g></svg>
<!-- THUMB END -->

<div class="a" style="left:318px;top:113px;width:1601px;height:22px;background:#e6e6e6"></div>
<span class="a" style="left:327px;top:116px;font-size:13px;line-height:15px;color:#333;white-space:nowrap">0.1 inch (2.7 0.6)</span>
<div class="a" style="left:439px;top:113px;width:1px;height:21px;background:#a8a8a8"></div>
<div class="a" style="left:455px;top:113px;width:1464px;height:22px;background:#fff;border-left:1px solid #a8a8a8;border-bottom:1px solid #9c9c9c"></div>
<div class="a" style="left:460px;top:117px;width:1px;height:15px;background:#000"></div>
<svg style="left:0;top:0" width="1919" height="135"><path d="M1906.3,121.8l4.2,4.8l4.2,-4.8" stroke="#333" stroke-width="1.9" fill="none"/></svg>
<div class="a" style="left:0;top:112px;width:1919px;height:1px;background:#8a8a8a"></div>
<div id="canvas" class="a"></div>
<div class="a" style="left:1900px;top:135px;width:19px;height:848px;background:#f0f0f0"></div>
<div class="a" style="left:319px;top:983px;width:1581px;height:20px;background:#f0f0f0"></div>
<div class="a" style="left:1900px;top:983px;width:19px;height:20px;background:#e6e6e6"></div>
<svg style="left:0;top:0" width="1919" height="1031">
<path d="M1905.3,148l4.3,-4.5l4.3,4.5" stroke="#adadad" stroke-width="1.5" fill="none"/>
<path d="M1905.3,968.5l4.3,5l4.3,-5" stroke="#adadad" stroke-width="1.5" fill="none"/>
<path d="M331.5,988.5l-4.5,4.2l4.5,4.2" stroke="#adadad" stroke-width="1.5" fill="none"/>
<path d="M1886.3,988.5l4.5,4.2l-4.5,4.2" stroke="#adadad" stroke-width="1.5" fill="none"/>
</svg>
<!-- SCHEMATIC START -->
<svg style="left:0;top:0" width="1919" height="1031" font-family="Liberation Sans">
<path d="M531,364 L574.7,364 L582.5,373.5 L574.7,383 L531,383 Z" stroke="#7c7c7c" stroke-width="2" fill="none"/>
<path d="M583.5,370.5 V376.5" stroke="#7c7c7c" stroke-width="1"/>
<text x="541.0" y="378.2" font-size="13.2" fill="#848484" text-anchor="start" textLength="32.7" lengthAdjust="spacingAndGlyphs">MOSI</text>
<path d="M611,349 L649.7,349 L657.5,358.5 L649.7,368 L611,368 Z" stroke="#7c7c7c" stroke-width="2" fill="none"/>
<path d="M658.5,355.5 V361.5" stroke="#7c7c7c" stroke-width="1"/>
<text x="620.3000000000001" y="363.2" font-size="13.2" fill="#848484" text-anchor="start" textLength="28.4" lengthAdjust="spacingAndGlyphs">GND</text>
<path d="M673,380 L709.7,380 L717.5,388.5 L709.7,397 L673,397 Z" stroke="#7c7c7c" stroke-width="2" fill="none"/>
<path d="M718.5,385.5 V391.5" stroke="#7c7c7c" stroke-width="1"/>
<text x="681.2" y="393.2" font-size="13.2" fill="#848484" text-anchor="start" textLength="27.5" lengthAdjust="spacingAndGlyphs">VCC</text>
<path d="M658.5,358.5 L766.5,358.5" stroke="#66916a" stroke-width="1" fill="none"/>
<path d="M583.5,374.5 L766.5,374.5" stroke="#66916a" stroke-width="1" fill="none"/>
<path d="M718.5,389.5 L766.5,389.5" stroke="#66916a" stroke-width="1" fill="none"/>
<path d="M806.5,358.5 L839.5,358.5 L839.5,328.5 L884.5,328.5" stroke="#66916a" stroke-width="1" fill="none"/>
<path d="M806.5,374.5 L854.5,374.5 L854.5,358.5 L899.5,358.5" stroke="#66916a" stroke-width="1" fill="none"/>
<path d="M806.5,389.5 L869.5,389.5" stroke="#66916a" stroke-width="1" fill="none"/>
<path d="M885.5,328.0 L893.3,319 L928,319 L928,337 L893.3,337 Z" stroke="#7c7c7c" stroke-width="2" fill="none"/>
<path d="M884.5,325.0 V331.0" stroke="#7c7c7c" stroke-width="1"/>
<text x="893.8" y="332.7" font-size="13.2" fill="#848484" text-anchor="start" textLength="27" lengthAdjust="spacingAndGlyphs">RST</text>
<path d="M900.5,358.5 L908.3,349 L944,349 L944,368 L908.3,368 Z" stroke="#7c7c7c" stroke-width="2" fill="none"/>
<path d="M899.5,355.5 V361.5" stroke="#7c7c7c" stroke-width="1"/>
<text x="908.8" y="363.2" font-size="13.2" fill="#848484" text-anchor="start" textLength="26.4" lengthAdjust="spacingAndGlyphs">SCK</text>
<path d="M870.5,389.5 L878.3,381 L921,381 L921,398 L878.3,398 Z" stroke="#7c7c7c" stroke-width="2" fill="none"/>
<path d="M869.5,386.5 V392.5" stroke="#7c7c7c" stroke-width="1"/>
<text x="878.8" y="394.2" font-size="13.2" fill="#848484" text-anchor="start" textLength="31.8" lengthAdjust="spacingAndGlyphs">MISO</text>
<rect x="742.6" y="344.6" width="87.8" height="58.7" fill="none" stroke="#a2434b" stroke-width="2.5"/>
<circle cx="773.4" cy="358.4" r="6.1" fill="none" stroke="#a2434b" stroke-width="1.2"/>
<circle cx="773.4" cy="374.3" r="6.1" fill="none" stroke="#a2434b" stroke-width="1.2"/>
<circle cx="773.4" cy="389.3" r="6.1" fill="none" stroke="#a2434b" stroke-width="1.2"/>
<circle cx="800.4" cy="358.4" r="6.1" fill="none" stroke="#a2434b" stroke-width="1.2"/>
<circle cx="800.4" cy="374.3" r="6.1" fill="none" stroke="#a2434b" stroke-width="1.2"/>
<circle cx="800.4" cy="389.3" r="6.1" fill="none" stroke="#a2434b" stroke-width="1.2"/>
<path d="M763,358.4h4 M763,374.3h4 M763,389.3h4 M806,358.4h4 M806,374.3h4 M806,389.3h4 M790,374.3h4 M773.4,380.5v4.5 M773.4,395.3v3" stroke="#a2434b" stroke-width="1.1"/>
<text x="748.6" y="369.7" font-size="8.7" fill="#848484" text-anchor="start" textLength="21" lengthAdjust="spacingAndGlyphs">GND</text>
<text x="748.6" y="384.7" font-size="8.7" fill="#848484" text-anchor="start" textLength="28.7" lengthAdjust="spacingAndGlyphs">MOSI</text>
<text x="748.6" y="399.1" font-size="8.7" fill="#848484" text-anchor="start" textLength="20.4" lengthAdjust="spacingAndGlyphs">VCC</text>
<text x="803.1" y="369.7" font-size="8.7" fill="#848484" text-anchor="start" textLength="19.2" lengthAdjust="spacingAndGlyphs">RST</text>
<text x="803.7" y="384.7" font-size="8.7" fill="#848484" text-anchor="start" textLength="18.6" lengthAdjust="spacingAndGlyphs">SCK</text>
<text x="796.5" y="399.1" font-size="8.7" fill="#848484" text-anchor="start" textLength="26.4" lengthAdjust="spacingAndGlyphs">MISO</text>
<text x="753.4" y="338.6" font-size="12.2" fill="#848484" text-anchor="start" textLength="76.6" lengthAdjust="spacingAndGlyphs">AVRISPSMD</text>
<text x="806.7" y="417.7" font-size="12.2" fill="#848484" text-anchor="start" textLength="23.3" lengthAdjust="spacingAndGlyphs">U$4</text>
<path d="M513,447 L532,447 L532,485.0 L522.5,492.5 L513,485.0 Z" stroke="#7c7c7c" stroke-width="2" fill="none"/>
<path d="M519.5,493.5 H525.5" stroke="#7c7c7c" stroke-width="1"/>
<text x="0" y="0" font-size="13.2" fill="#848484" textLength="28.4" lengthAdjust="spacingAndGlyphs" transform="translate(527.2,484.0) rotate(-90)">GND</text>
<path d="M522.5,493.5 L522.5,554.5 L568.5,554.5" stroke="#66916a" stroke-width="1" fill="none"/>
<path d="M478,575 L513.7,575 L521.5,583.5 L513.7,592 L478,592 Z" stroke="#7c7c7c" stroke-width="2" fill="none"/>
<path d="M522.5,580.5 V586.5" stroke="#7c7c7c" stroke-width="1"/>
<text x="485.20000000000005" y="588.2" font-size="13.2" fill="#848484" text-anchor="start" textLength="27.5" lengthAdjust="spacingAndGlyphs">VCC</text>
<path d="M522.5,584.5 L568.5,584.5" stroke="#66916a" stroke-width="1" fill="none"/>
<path d="M455,621 L498.7,621 L506.5,629.5 L498.7,638 L455,638 Z" stroke="#7c7c7c" stroke-width="2" fill="none"/>
<path d="M507.5,626.5 V632.5" stroke="#7c7c7c" stroke-width="1"/>
<text x="465.5" y="634.2" font-size="13.2" fill="#848484" text-anchor="start" textLength="32.2" lengthAdjust="spacingAndGlyphs">MISO</text>
<path d="M507.5,629.5 L522.5,629.5 L522.5,599.5 L568.5,599.5" stroke="#66916a" stroke-width="1" fill="none"/>
<path d="M455,665 L498.7,665 L506.5,673.5 L498.7,682 L455,682 Z" stroke="#7c7c7c" stroke-width="2" fill="none"/>
<path d="M507.5,670.5 V676.5" stroke="#7c7c7c" stroke-width="1"/>
<text x="465.0" y="678.2" font-size="13.2" fill="#848484" text-anchor="start" textLength="32.7" lengthAdjust="spacingAndGlyphs">MOSI</text>
<path d="M507.5,674.5 L538.5,674.5 L538.5,614.5 L568.5,614.5" stroke="#66916a" stroke-width="1" fill="none"/>
<path d="M568.5,554.5 L598.5,554.5" stroke="#8e4047" stroke-width="1.2" fill="none"/>
<text x="582" y="551.3" font-size="12.4" fill="#848484" text-anchor="end">1</text>
<path d="M568.5,569.5 L598.5,569.5" stroke="#8e4047" stroke-width="1.2" fill="none"/>
<text x="582" y="566.4" font-size="12.4" fill="#848484" text-anchor="end">2</text>
<path d="M568.5,584.5 L598.5,584.5" stroke="#8e4047" stroke-width="1.2" fill="none"/>
<text x="582" y="581.5" font-size="12.4" fill="#848484" text-anchor="end">3</text>
<path d="M568.5,599.5 L598.5,599.5" stroke="#8e4047" stroke-width="1.2" fill="none"/>
<text x="582" y="596.7" font-size="12.4" fill="#848484" text-anchor="end">4</text>
<path d="M568.5,614.5 L598.5,614.5" stroke="#8e4047" stroke-width="1.2" fill="none"/>
<text x="582" y="611.5" font-size="12.4" fill="#848484" text-anchor="end">5</text>
<path d="M568.5,629.5 L598.5,629.5" stroke="#8e4047" stroke-width="1.2" fill="none"/>
<text x="582" y="626.3" font-size="12.4" fill="#848484" text-anchor="end">6</text>
<path d="M568.1,624.3v10" stroke="#a2434b" stroke-width="1.1"/>
<rect x="583.9" y="528.6" width="58.4" height="123.3" fill="none" stroke="#a2434b" stroke-width="1.8"/>
<text x="611.7" y="559.3" font-size="12.4" fill="#848484" text-anchor="start" textLength="25.8" lengthAdjust="spacingAndGlyphs">GND</text>
<text x="611.7" y="574.4" font-size="12.4" fill="#848484" text-anchor="start" textLength="23.5" lengthAdjust="spacingAndGlyphs">CTS</text>
<text x="611.7" y="589.5" font-size="12.4" fill="#848484" text-anchor="start" textLength="25" lengthAdjust="spacingAndGlyphs">VCC</text>
<text x="611.7" y="604.7" font-size="12.4" fill="#848484" text-anchor="start" textLength="24.5" lengthAdjust="spacingAndGlyphs">TXD</text>
<text x="611.7" y="619.5" font-size="12.4" fill="#848484" text-anchor="start" textLength="25.5" lengthAdjust="spacingAndGlyphs">RXD</text>
<text x="611.7" y="634.3" font-size="12.4" fill="#848484" text-anchor="start" textLength="24" lengthAdjust="spacingAndGlyphs">RTS</text>
<text x="590.8" y="544.3" font-size="12.5" fill="#848484" text-anchor="start" textLength="43.1" lengthAdjust="spacingAndGlyphs">(Black)</text>
<text x="587.7" y="647.6" font-size="12.5" fill="#848484" text-anchor="start" textLength="48.8" lengthAdjust="spacingAndGlyphs">(Green)</text>
<path d="M703.5,810.5 L703.5,464.5 L974.5,464.5" stroke="#66916a" stroke-width="1" fill="none"/>
<path d="M974.5,464.5 L988.5,464.5" stroke="#8e4047" stroke-width="1" fill="none"/>
<path d="M989.3,456.6 L989.3,471.3 L1004,464.2 Z" fill="none" stroke="#a2434b" stroke-width="1.8"/>
<path d="M1004.6,455.5 V472.3" stroke="#a2434b" stroke-width="1.8"/>
<path d="M1004.5,464.5 L1021.5,464.5" stroke="#8e4047" stroke-width="1" fill="none"/>
<path d="M1021.5,464.5 L1094.5,464.5" stroke="#66916a" stroke-width="1" fill="none"/>
<path d="M1094.5,464.5 L1109.5,464.5" stroke="#8e4047" stroke-width="1" fill="none"/>
<path d="M1109,464.6 L1111.9,458.3 L1115.6,470.3 L1119.9,458.3 L1123.6,470.3 L1127.4,458.3 L1131.1,470.3 L1135.3,458.3 L1139.1,470.3 L1141,464.6" fill="none" stroke="#a2434b" stroke-width="2.6" stroke-linejoin="bevel"/>
<path d="M1141.5,464.5 L1156.5,464.5" stroke="#8e4047" stroke-width="1" fill="none"/>
<path d="M1156.5,464.5 L1200.5,464.5" stroke="#66916a" stroke-width="1" fill="none"/>
<path d="M1201.5,464.0 L1209.3,455 L1247,455 L1247,473 L1209.3,473 Z" stroke="#7c7c7c" stroke-width="2" fill="none"/>
<path d="M1200.5,461.0 V467.0" stroke="#7c7c7c" stroke-width="1"/>
<text x="1209.8" y="468.7" font-size="13.2" fill="#848484" text-anchor="start" textLength="28.4" lengthAdjust="spacingAndGlyphs">GND</text>
<path d="M994.3,476.5 L1002,484 M1001.2,476.5 L1009,484" stroke="#a2434b" stroke-width="0.9"/>
<path d="M1003.5,485.5 L998.5,483.5 L1001.5,480.5 Z M1010.5,485.5 L1005.5,483.5 L1008.5,480.5 Z" fill="#a2434b" stroke="#a2434b" stroke-width="1"/>
<text x="931.7" y="440.7" font-size="12.8" fill="#848484" text-anchor="start" textLength="83.5" lengthAdjust="spacingAndGlyphs">LEDFAB1206</text>
<text x="991.9" y="453.5" font-size="12.8" fill="#848484" text-anchor="start" textLength="23.3" lengthAdjust="spacingAndGlyphs">U$3</text>
<text x="1103" y="454.7" font-size="12.8" fill="#848484" text-anchor="start" textLength="15.5" lengthAdjust="spacingAndGlyphs">R1</text>
<path d="M733.5,795.5 L733.5,509.5 L1381.5,509.5 L1381.5,524.5" stroke="#66916a" stroke-width="1" fill="none"/>
<path d="M1246.5,524.5 L1381.5,524.5" stroke="#66916a" stroke-width="1" fill="none"/>
<path d="M1246.5,524.5 L1246.5,540.5 L1259.5,551.5" stroke="#8e4047" stroke-width="1.1" fill="none"/>
<path d="M1259.5,556.5 L1246.5,569.5 L1246.5,583.5" stroke="#8e4047" stroke-width="1.1" fill="none"/>
<rect x="1259.1" y="539" width="4.7" height="30.5" fill="#a2434b"/>
<path d="M1246.9,541.2 L1256.3,545.3 L1250.5,548.5 Z" fill="#fff" stroke="#a2434b" stroke-width="1"/>
<path d="M1246.4,551v6.6 M1243.1,554.3h6.6" stroke="#a2434b" stroke-width="1"/>
<path d="M1279.8,539 L1270,548.8 M1278.5,550.3 L1268.8,560" stroke="#a2434b" stroke-width="1"/>
<path d="M1268.2,550.6 L1269.8,543.3 L1275,547.3 Z M1267.1,561.5 L1268.7,554.2 L1273.9,558.2 Z" fill="#fff" stroke="#a2434b" stroke-width="1"/>
<path d="M1246.5,583.5 L1246.5,629.5" stroke="#66916a" stroke-width="1" fill="none"/>
<path d="M1245.5,630.5 L1255,638.0 L1255,675 L1236,675 L1236,638.0 Z" stroke="#7c7c7c" stroke-width="2" fill="none"/>
<path d="M1242.5,629.5 H1248.5" stroke="#7c7c7c" stroke-width="1"/>
<text x="0" y="0" font-size="13.2" fill="#848484" textLength="27.5" lengthAdjust="spacingAndGlyphs" transform="translate(1250.2,667.5) rotate(-90)">VCC</text>
<path d="M1381.5,524.5 L1395.5,524.5" stroke="#8e4047" stroke-width="1" fill="none"/>
<path d="M1395.6,524.5 L1398.5,518.3 L1402.3,530 L1406.3,518.3 L1410,530 L1414,518.3 L1417.8,530 L1422,518.3 L1425.8,530 L1427.5,524.5" fill="none" stroke="#a2434b" stroke-width="2.6" stroke-linejoin="bevel"/>
<path d="M1427.5,524.5 L1440.5,524.5" stroke="#8e4047" stroke-width="1" fill="none"/>
<path d="M1440.5,524.5 L1486.5,524.5" stroke="#66916a" stroke-width="1" fill="none"/>
<path d="M1487.5,524.0 L1495.3,515 L1534,515 L1534,533 L1495.3,533 Z" stroke="#7c7c7c" stroke-width="2" fill="none"/>
<path d="M1486.5,521.0 V527.0" stroke="#7c7c7c" stroke-width="1"/>
<text x="1495.8" y="528.7" font-size="13.2" fill="#848484" text-anchor="start" textLength="28.4" lengthAdjust="spacingAndGlyphs">GND</text>
<text x="1388.7" y="514.3" font-size="12.8" fill="#848484" text-anchor="start" textLength="16.3" lengthAdjust="spacingAndGlyphs">R2</text>
<text x="1029.7" y="564.7" font-size="12.8" fill="#848484" text-anchor="start" textLength="199.1" lengthAdjust="spacingAndGlyphs">PHOTOTRANSISTOR-NPN1206</text>
<text x="1205.5" y="579.6" font-size="12.8" fill="#848484" text-anchor="start" textLength="23.3" lengthAdjust="spacingAndGlyphs">U$5</text>
<path d="M754,661 L773,661 L773,697.0 L763.5,704.5 L754,697.0 Z" stroke="#7c7c7c" stroke-width="2" fill="none"/>
<path d="M760.5,705.5 H766.5" stroke="#7c7c7c" stroke-width="1"/>
<text x="0" y="0" font-size="13.2" fill="#848484" textLength="27" lengthAdjust="spacingAndGlyphs" transform="translate(768.2,696.0) rotate(-90)">RST</text>
<path d="M763.5,705.5 L763.5,780.5 L793.5,780.5" stroke="#66916a" stroke-width="1" fill="none"/>
<path d="M703.5,810.5 L793.5,810.5" stroke="#66916a" stroke-width="1" fill="none"/>
<path d="M733.5,795.5 L793.5,795.5" stroke="#66916a" stroke-width="1" fill="none"/>
<path d="M686,816 L724.7,816 L732.5,824.5 L724.7,833 L686,833 Z" stroke="#7c7c7c" stroke-width="2" fill="none"/>
<path d="M733.5,821.5 V827.5" stroke="#7c7c7c" stroke-width="1"/>
<text x="695.3000000000001" y="829.2" font-size="13.2" fill="#848484" text-anchor="start" textLength="28.4" lengthAdjust="spacingAndGlyphs">GND</text>
<path d="M733.5,825.5 L793.5,825.5" stroke="#66916a" stroke-width="1" fill="none"/>
<path d="M793.5,780.5 L801.5,780.5" stroke="#a2434b" stroke-width="2" fill="none"/>
<text x="787.7" y="778.3000000000001" font-size="12.4" fill="#848484" text-anchor="middle">1</text>
<path d="M793.5,795.5 L801.5,795.5" stroke="#a2434b" stroke-width="2" fill="none"/>
<text x="787.7" y="793.3000000000001" font-size="12.4" fill="#848484" text-anchor="middle">2</text>
<path d="M793.5,810.5 L801.5,810.5" stroke="#a2434b" stroke-width="2" fill="none"/>
<text x="787.7" y="808.3000000000001" font-size="12.4" fill="#848484" text-anchor="middle">3</text>
<path d="M793.5,825.5 L801.5,825.5" stroke="#a2434b" stroke-width="2" fill="none"/>
<text x="787.7" y="823.3000000000001" font-size="12.4" fill="#848484" text-anchor="middle">4</text>
<rect x="802" y="766.2" width="510.2" height="73.3" fill="none" stroke="#a2434b" stroke-width="2.2"/>
<rect x="801" y="765.2" width="9.6" height="9.6" fill="#a2434b"/>
<text x="807.4" y="784.1" font-size="12.4" fill="#848484" text-anchor="start" textLength="173.4" lengthAdjust="spacingAndGlyphs">PB5/PCINT5/-RESET/ADC0/DW</text>
<text x="807.4" y="799.1" font-size="12.4" fill="#848484" text-anchor="start" textLength="210" lengthAdjust="spacingAndGlyphs">PB3/PCINT3/XTAL1/CLKI/-OC1B/ADC3</text>
<text x="807.4" y="814.1" font-size="12.4" fill="#848484" text-anchor="start" textLength="212" lengthAdjust="spacingAndGlyphs">PB4/PCINT4/XTAL2/CLKO/OC1B/ADC2</text>
<text x="807.4" y="829.1" font-size="12.4" fill="#848484" text-anchor="start" textLength="25.5" lengthAdjust="spacingAndGlyphs">GND</text>
<text x="1305.2" y="784.2" font-size="12.4" fill="#848484" text-anchor="start" textLength="25.5" lengthAdjust="spacingAndGlyphs" dx="-25.5">VCC</text>
<text x="1305.2" y="799.1" font-size="12.4" fill="#848484" text-anchor="start" textLength="240.5" lengthAdjust="spacingAndGlyphs" dx="-240.5">SCK/USCK/SCL/ADC1/T0/INT0/PCINT2/PB2</text>
<text x="1305.2" y="814.3" font-size="12.4" fill="#848484" text-anchor="start" textLength="221.4" lengthAdjust="spacingAndGlyphs" dx="-221.4">MISO/DO/AIN1/OC0B/OC1A/PCINT1/PB1</text>
<text x="1305.2" y="829.3" font-size="12.4" fill="#848484" text-anchor="start" textLength="278.8" lengthAdjust="spacingAndGlyphs" dx="-278.8">MOSI/DI/SDA/AIN0/OC0A/-OC1A/AREF/PCINT0/PB0</text>
<path d="M1313.5,780.5 L1321.5,780.5" stroke="#a2434b" stroke-width="2" fill="none"/>
<text x="1325.2" y="778.4000000000001" font-size="12.4" fill="#848484" text-anchor="middle">8</text>
<path d="M1313.5,795.5 L1321.5,795.5" stroke="#a2434b" stroke-width="2" fill="none"/>
<text x="1325.2" y="793.3000000000001" font-size="12.4" fill="#848484" text-anchor="middle">7</text>
<path d="M1313.5,810.5 L1321.5,810.5" stroke="#a2434b" stroke-width="2" fill="none"/>
<text x="1325.2" y="808.5" font-size="12.4" fill="#848484" text-anchor="middle">6</text>
<path d="M1313.5,825.5 L1321.5,825.5" stroke="#a2434b" stroke-width="2" fill="none"/>
<text x="1325.2" y="823.5" font-size="12.4" fill="#848484" text-anchor="middle">5</text>
<path d="M1112,806.3v8 M1108,810.3h8" stroke="#a2434b" stroke-width="1"/>
<path d="M1342,660 L1360,660 L1360,696.0 L1351.0,703.5 L1342,696.0 Z" stroke="#7c7c7c" stroke-width="2" fill="none"/>
<path d="M1348.0,704.5 H1354.0" stroke="#7c7c7c" stroke-width="1"/>
<text x="0" y="0" font-size="13.2" fill="#848484" textLength="27.5" lengthAdjust="spacingAndGlyphs" transform="translate(1355.7,695.0) rotate(-90)">VCC</text>
<path d="M1351.5,704.5 L1351.5,780.5 L1321.5,780.5" stroke="#66916a" stroke-width="1" fill="none"/>
<path d="M1427.5,750.0 L1435.3,742 L1471,742 L1471,758 L1435.3,758 Z" stroke="#7c7c7c" stroke-width="2" fill="none"/>
<path d="M1426.5,747.0 V753.0" stroke="#7c7c7c" stroke-width="1"/>
<text x="1435.8" y="754.7" font-size="13.2" fill="#848484" text-anchor="start" textLength="26.4" lengthAdjust="spacingAndGlyphs">SCK</text>
<path d="M1321.5,795.5 L1381.5,795.5 L1381.5,750.5 L1426.5,750.5" stroke="#66916a" stroke-width="1" fill="none"/>
<path d="M1442.5,795.0 L1450.3,786 L1493,786 L1493,804 L1450.3,804 Z" stroke="#7c7c7c" stroke-width="2" fill="none"/>
<path d="M1441.5,792.0 V798.0" stroke="#7c7c7c" stroke-width="1"/>
<text x="1450.8" y="799.7" font-size="13.2" fill="#848484" text-anchor="start" textLength="31.8" lengthAdjust="spacingAndGlyphs">MISO</text>
<path d="M1321.5,810.5 L1411.5,810.5 L1411.5,795.5 L1441.5,795.5" stroke="#66916a" stroke-width="1" fill="none"/>
<path d="M1442.5,825.5 L1450.3,817 L1493,817 L1493,834 L1450.3,834 Z" stroke="#7c7c7c" stroke-width="2" fill="none"/>
<path d="M1441.5,822.5 V828.5" stroke="#7c7c7c" stroke-width="1"/>
<text x="1450.8" y="830.2" font-size="13.2" fill="#848484" text-anchor="start" textLength="32.7" lengthAdjust="spacingAndGlyphs">MOSI</text>
<path d="M1321.5,825.5 L1441.5,825.5" stroke="#66916a" stroke-width="1" fill="none"/>
<text x="921" y="854.8" font-size="12.8" fill="#848484" text-anchor="start" textLength="54.5" lengthAdjust="spacingAndGlyphs">ATtiny45</text>
<text x="1140.5" y="855" font-size="12.8" fill="#848484" text-anchor="start" textLength="23" lengthAdjust="spacingAndGlyphs">U$1</text>
<g fill="#000"><rect x="635" y="855" width="1" height="1"/><rect x="643" y="847" width="1" height="1"/><rect x="637" y="855" width="1" height="1"/><rect x="643" y="849" width="1" height="1"/><rect x="639" y="855" width="1" height="1"/><rect x="643" y="851" width="1" height="1"/><rect x="641" y="855" width="1" height="1"/><rect x="643" y="853" width="1" height="1"/><rect x="645" y="855" width="1" height="1"/><rect x="643" y="857" width="1" height="1"/><rect x="647" y="855" width="1" height="1"/><rect x="643" y="859" width="1" height="1"/><rect x="649" y="855" width="1" height="1"/><rect x="643" y="861" width="1" height="1"/><rect x="651" y="855" width="1" height="1"/><rect x="643" y="863" width="1" height="1"/><path d="M642.5,854.5h2v2h-2z" fill="none" stroke="#000" stroke-width="0.8"/></g>
</svg>
<!-- SCHEMATIC END -->

<div id="status" class="a"></div>
<span class="a" style="left:2px;top:1009px;font-size:15px;line-height:17px;color:#222;white-space:nowrap;transform:scaleX(0.867);transform-origin:0 0">Net: VCC, Class: 0 default Left-click to select object to show (or type object name)</span>
<div class="a" style="left:1876px;top:1005px;width:1px;height:26px;background:#cfcfcf"></div>
<div class="a" style="left:1898px;top:1005px;width:1px;height:26px;background:#cfcfcf"></div>
<svg style="left:0;top:0" width="1919" height="1031">
<path d="M1889,1010l-4,6h4l-2,7" stroke="#c4c4c4" stroke-width="2" fill="none"/>
<circle cx="1911" cy="1017.6" r="7.5" fill="#333"/>
<path d="M1911,1012v7" stroke="#fff" stroke-width="2.2"/><circle cx="1911" cy="1022" r="1.2" fill="#fff"/>
</svg>

</body></html>
